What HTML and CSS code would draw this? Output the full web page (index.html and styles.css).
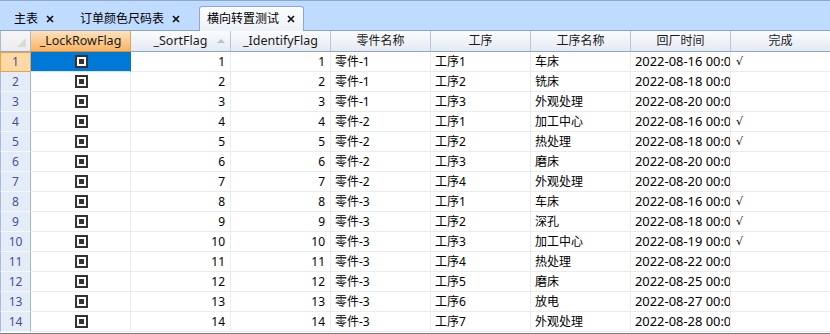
FILE: index.html
```html
<!DOCTYPE html>
<html>
<head>
<meta charset="utf-8">
<link rel="stylesheet" href="styles.css">
</head>
<body>
<div class="app">
  <div class="tabs">
    <div class="tab"><span>主表</span><svg class="x" viewBox="0 0 8 8"><path d="M1 1L7 7M7 1L1 7"/></svg></div>
    <div class="tab"><span>订单颜色尺码表</span><svg class="x" viewBox="0 0 8 8"><path d="M1 1L7 7M7 1L1 7"/></svg></div>
    <div class="tab active"><span>横向转置测试</span><svg class="x" viewBox="0 0 8 8"><path d="M1 1L7 7M7 1L1 7"/></svg></div>
  </div>
  <div class="grid">
    <div class="row head">
      <div class="corner"><span class="tri"></span></div>
      <div class="hc lat sel">_LockRowFlag</div>
      <div class="hc lat">_SortFlag<span class="sort"></span></div>
      <div class="hc lat">_IdentifyFlag</div>
      <div class="hc">零件名称</div>
      <div class="hc">工序</div>
      <div class="hc">工序名称</div>
      <div class="hc">回厂时间</div>
      <div class="hc">完成</div>
    </div>
    <div class="row"><div class="rh cur">1</div><div class="c chk selc"><i></i></div><div class="c n">1</div><div class="c n">1</div><div class="c">零件-1</div><div class="c">工序1</div><div class="c">车床</div><div class="c d">2022-08-16 00:0</div><div class="c ok">√</div></div>
    <div class="row"><div class="rh">2</div><div class="c chk"><i></i></div><div class="c n">2</div><div class="c n">2</div><div class="c">零件-1</div><div class="c">工序2</div><div class="c">铣床</div><div class="c d">2022-08-18 00:0</div><div class="c"></div></div>
    <div class="row"><div class="rh">3</div><div class="c chk"><i></i></div><div class="c n">3</div><div class="c n">3</div><div class="c">零件-1</div><div class="c">工序3</div><div class="c">外观处理</div><div class="c d">2022-08-20 00:0</div><div class="c"></div></div>
    <div class="row"><div class="rh">4</div><div class="c chk"><i></i></div><div class="c n">4</div><div class="c n">4</div><div class="c">零件-2</div><div class="c">工序1</div><div class="c">加工中心</div><div class="c d">2022-08-16 00:0</div><div class="c ok">√</div></div>
    <div class="row"><div class="rh">5</div><div class="c chk"><i></i></div><div class="c n">5</div><div class="c n">5</div><div class="c">零件-2</div><div class="c">工序2</div><div class="c">热处理</div><div class="c d">2022-08-18 00:0</div><div class="c ok">√</div></div>
    <div class="row"><div class="rh">6</div><div class="c chk"><i></i></div><div class="c n">6</div><div class="c n">6</div><div class="c">零件-2</div><div class="c">工序3</div><div class="c">磨床</div><div class="c d">2022-08-20 00:0</div><div class="c"></div></div>
    <div class="row"><div class="rh">7</div><div class="c chk"><i></i></div><div class="c n">7</div><div class="c n">7</div><div class="c">零件-2</div><div class="c">工序4</div><div class="c">外观处理</div><div class="c d">2022-08-20 00:0</div><div class="c"></div></div>
    <div class="row"><div class="rh">8</div><div class="c chk"><i></i></div><div class="c n">8</div><div class="c n">8</div><div class="c">零件-3</div><div class="c">工序1</div><div class="c">车床</div><div class="c d">2022-08-16 00:0</div><div class="c ok">√</div></div>
    <div class="row"><div class="rh">9</div><div class="c chk"><i></i></div><div class="c n">9</div><div class="c n">9</div><div class="c">零件-3</div><div class="c">工序2</div><div class="c">深孔</div><div class="c d">2022-08-18 00:0</div><div class="c ok">√</div></div>
    <div class="row"><div class="rh">10</div><div class="c chk"><i></i></div><div class="c n">10</div><div class="c n">10</div><div class="c">零件-3</div><div class="c">工序3</div><div class="c">加工中心</div><div class="c d">2022-08-19 00:0</div><div class="c ok">√</div></div>
    <div class="row"><div class="rh">11</div><div class="c chk"><i></i></div><div class="c n">11</div><div class="c n">11</div><div class="c">零件-3</div><div class="c">工序4</div><div class="c">热处理</div><div class="c d">2022-08-22 00:0</div><div class="c"></div></div>
    <div class="row"><div class="rh">12</div><div class="c chk"><i></i></div><div class="c n">12</div><div class="c n">12</div><div class="c">零件-3</div><div class="c">工序5</div><div class="c">磨床</div><div class="c d">2022-08-25 00:0</div><div class="c"></div></div>
    <div class="row"><div class="rh">13</div><div class="c chk"><i></i></div><div class="c n">13</div><div class="c n">13</div><div class="c">零件-3</div><div class="c">工序6</div><div class="c">放电</div><div class="c d">2022-08-27 00:0</div><div class="c"></div></div>
    <div class="row"><div class="rh">14</div><div class="c chk"><i></i></div><div class="c n">14</div><div class="c n">14</div><div class="c">零件-3</div><div class="c">工序7</div><div class="c">外观处理</div><div class="c d">2022-08-28 00:0</div><div class="c"></div></div>
  </div>
</div>
</body>
</html>
```
FILE: styles.css
```css
* { box-sizing: border-box; }
html, body { margin: 0; padding: 0; background: #fff; }
body {
  font-family: "Noto Sans", "Noto Sans CJK SC", sans-serif;
  font-size: 12px;
  color: #000;
  width: 830px;
  height: 334px;
  overflow: hidden;
}
.app { width: 830px; height: 334px; overflow: hidden; display: flex; flex-direction: column; }

.tabs {
  height: 31px;
  flex: none;
  background: #bfdbff;
  border-top: 1px solid #8ea8c8;
  border-bottom: 1px solid #8aa4c4;
  display: flex;
  align-items: flex-end;
  padding-left: 5px;
  gap: 7px;
}
.tab {
  height: 24px;
  display: flex;
  align-items: center;
  gap: 8px;
  padding: 0 9px 0 8px;
  border: 1px solid transparent;
  border-bottom: none;
  line-height: 1;
  color: #000;
}
.tab.active {
  margin-left: 2px;
  background: linear-gradient(#fbfcfe, #eef2f8);
  border-color: #8ea8c8;
  border-radius: 3px 3px 0 0;
  margin-bottom: -1px;
  height: 25px;
  padding: 0 8px 1px 7px;
}
.x { width: 8px; height: 8px; flex: none; }
.x path { stroke: #111; stroke-width: 1.7; fill: none; }

.grid { flex: none; overflow: hidden; }
.row {
  display: grid;
  grid-template-columns: 31px repeat(8, 100px);
  height: 20px;
  width: 831px;
}
.row.head { height: 21px; }

.corner {
  position: relative;
  background: linear-gradient(#f6f6f6, #ececec);
  border-left: 1px solid #a9bcd3;
  border-right: 1px solid #a9bcd3;
  border-bottom: 1px solid #8ea7c4;
}
.tri {
  position: absolute;
  right: 4px;
  bottom: 4px;
  width: 0; height: 0;
  border-left: 9px solid transparent;
  border-bottom: 9px solid #dadada;
}
.hc {
  position: relative;
  background: linear-gradient(#fbfcfe, #e4eaf2);
  border-right: 1px solid #b7c8dc;
  border-bottom: 1px solid #8ea7c4;
  text-align: center;
  line-height: 19px;
  white-space: nowrap;
  overflow: hidden;
  color: #1a1a1a;
}
.hc.lat { font-size: 12.5px; }
.hc.sel {
  background: linear-gradient(#fde3bd, #f8b462);
  border-right-color: #e9a25a;
  border-bottom-color: #d98a3a;
}
.sort {
  position: absolute;
  right: 5px;
  top: 8px;
  width: 0; height: 0;
  border-left: 4px solid transparent;
  border-right: 4px solid transparent;
  border-bottom: 4px solid #b9c2cc;
}

.rh {
  background: #e4ecf7;
  border-left: 1px solid #a9bcd3;
  border-right: 1px solid #a3b8d0;
  border-bottom: 1px solid #f4f7fb;
  color: #46509a;
  text-align: center;
  line-height: 19px;
}
.rh.cur {
  background: #fdd9a6;
  border: 1px solid #f2a14a;
  line-height: 18px;
}
.c {
  border-right: 1px solid #ececec;
  border-bottom: 1px solid #ececec;
  line-height: 19px;
  padding: 0 4px;
  white-space: nowrap;
  overflow: hidden;
}
.c.n { text-align: right; padding-right: 5px; }
.c.d { font-size: 12.9px; padding-left: 4px; }
.c.ok { font-family: "DejaVu Sans", sans-serif; font-size: 11px; padding-left: 5px; }
.c.chk { display: flex; align-items: center; justify-content: center; padding: 0; }
.c.chk i {
  display: block;
  width: 13px;
  height: 13px;
  border: 2px solid #333;
  background: #fff;
  padding: 2px;
  margin-top: -1px;
  margin-left: 1px;
}
.c.chk i::after {
  content: "";
  display: block;
  width: 5px;
  height: 5px;
  background: #333;
}
.c.selc { background: #0078d7; border-right-color: #0078d7; border-bottom-color: #d6e6f5; }

.grid::after {
  content: "";
  display: block;
  height: 2px;
  background: #7d7d7d;
  margin-top: 1px;
}
```
